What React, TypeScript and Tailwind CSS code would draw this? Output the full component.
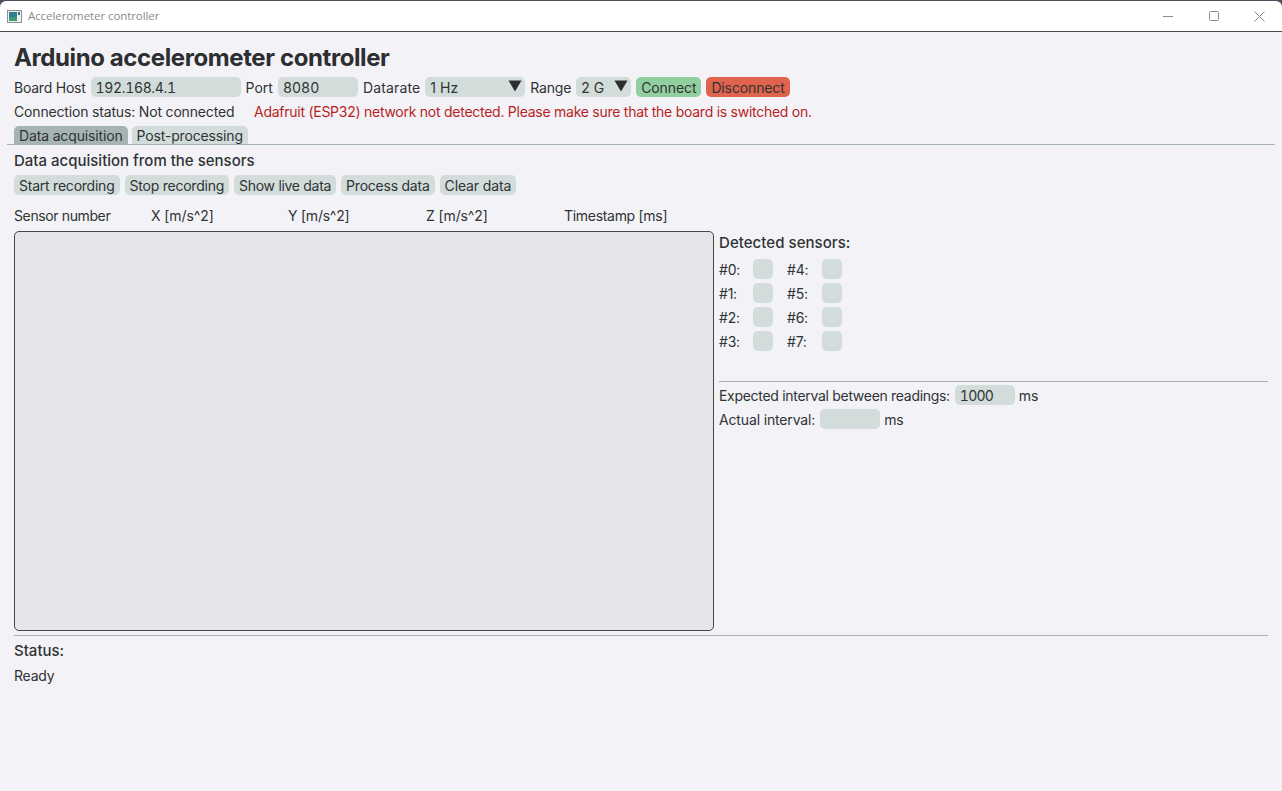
import React from "react";

const Field = ({ className = "", children }: { className?: string; children?: React.ReactNode }) => (
  <div className={`h-5 rounded-[5px] bg-[#d2dcda] px-[5px] tabular-nums ${className}`}>{children}</div>
);

const Btn = ({ children, className = "bg-[#d2dcda]" }: { children: React.ReactNode; className?: string }) => (
  <div className={`h-5 rounded-[5px] px-[5px] ${className}`}>{children}</div>
);

const Select = ({ className, children }: { className: string; children: React.ReactNode }) => (
  <div className={`flex h-5 items-start justify-between rounded-[5px] bg-[#d2dcda] pl-[5px] pr-[3px] tracking-normal ${className}`}>
    <span>{children}</span>
    <svg width="14" height="12" viewBox="0 0 14 12" className="mt-[3px]">
      <path d="M0.5 0.5H13.5L7 11.5Z" fill="#2a2e2e" />
    </svg>
  </div>
);

const sensors = [
  ["#0:", "#4:"],
  ["#1:", "#5:"],
  ["#2:", "#6:"],
  ["#3:", "#7:"],
];

const columns = [
  ["Sensor number", "w-[137px] tracking-[-0.38px]"],
  ["X [m/s^2]", "w-[137px] tracking-[-0.1px]"],
  ["Y [m/s^2]", "w-[138px]"],
  ["Z [m/s^2]", "w-[138px] tracking-[-0.12px]"],
  ["Timestamp [ms]", "tracking-[-0.3px]"],
];

export default function App() {
  return (
    <div className="flex h-[791px] w-[1282px] flex-col overflow-hidden bg-[#f2f2f7] font-['Inter',sans-serif] text-[14px] leading-5 tracking-[-0.23px] text-[#303334]">
      <div className="shrink-0 bg-[#50505c]">
        <div className="mt-px flex h-[30px] items-center justify-between rounded-t-[6px] bg-white pl-[7px]">
          <div className="flex items-center gap-[6px]">
            <svg width="15" height="13" viewBox="0 0 15 13">
              <rect x="0.5" y="0.5" width="14" height="12" fill="#f0f0f0" stroke="#8a8f94" />
              <rect x="2" y="2" width="8" height="9" fill="#2f7f8f" />
              <rect x="2" y="7" width="8" height="4" fill="#3f9a78" />
              <rect x="11" y="2" width="2" height="3" fill="#3f6f8f" />
            </svg>
            <span className="font-['Open_Sans',sans-serif] text-[11.5px] tracking-[-0.08px] text-[#8a8a8a]">Accelerometer controller</span>
          </div>
          <div className="flex items-center">
            <div className="flex w-[46px] justify-center">
              <svg width="10" height="10" viewBox="0 0 10 10">
                <path d="M0 5.5H10" stroke="#8a8a8a" />
              </svg>
            </div>
            <div className="flex w-[46px] justify-center">
              <svg width="10" height="10" viewBox="0 0 10 10">
                <rect x="0.5" y="0.5" width="9" height="9" rx="1" fill="none" stroke="#8a8a8a" />
              </svg>
            </div>
            <div className="flex w-[45px] justify-center">
              <svg width="11" height="11" viewBox="0 0 11 11">
                <path d="M0.5 0.5L10.5 10.5M10.5 0.5L0.5 10.5" stroke="#8a8a8a" />
              </svg>
            </div>
          </div>
        </div>
        <div className="h-px bg-[#4a4a50]" />
      </div>

      <div className="flex flex-1 flex-col px-[14px]">
        <h1 className="mt-[12px] h-[28px] text-[24px] font-bold leading-[28px] tracking-[-0.4px] text-[#2c2e30]">
          Arduino accelerometer controller
        </h1>
        <div className="mt-[5px] flex h-5 items-start gap-[5px] leading-[22px]">
          <span>Board Host</span>
          <Field className="w-[150px] tracking-[-0.35px]">192.168.4.1</Field>
          <span className="tracking-normal">Port</span>
          <Field className="w-[80px] tracking-normal">8080</Field>
          <span className="tracking-[0.15px]">Datarate</span>
          <Select className="w-[100px]">1 Hz</Select>
          <span className="tracking-[-0.2px]">Range</span>
          <Select className="w-[55px]">2 G</Select>
          <Btn className="bg-[#92cf9f] tracking-[-0.1px]">Connect</Btn>
          <Btn className="bg-[#e0634e] tracking-[-0.13px]">Disconnect</Btn>
        </div>
        <div className="mt-[5px] flex">
          <span className="w-[240px] tracking-[-0.17px]">Connection status: Not connected</span>
          <span className="tracking-[-0.26px] text-[#b81f24]">Adafruit (ESP32) network not detected. Please make sure that the board is switched on.</span>
        </div>
        <div className="-mx-[7px] mt-[4px] flex gap-[4px] border-b border-[#a5b4b2] px-[7px] tracking-[-0.15px]">
          <div className="h-[18px] rounded-t-[5px] bg-[#a5b4b2] px-[5px]">Data acquisition</div>
          <div className="h-[18px] rounded-t-[5px] bg-[#d2dcda] px-[5px]">Post-processing</div>
        </div>
        <h2 className="mt-[6px] text-[15px] font-medium leading-5 tracking-normal">Data acquisition from the sensors</h2>
        <div className="mt-[4px] flex h-5 gap-[5px] leading-[22px]">
          <Btn>Start recording</Btn>
          <Btn>Stop recording</Btn>
          <Btn className="bg-[#d2dcda] tracking-[-0.3px]">Show live data</Btn>
          <Btn>Process data</Btn>
          <Btn className="bg-[#d2dcda] tracking-[-0.13px]">Clear data</Btn>
        </div>
        <div className="mt-[11px] flex">
          {columns.map(([label, className]) => (
            <span key={label} className={className}>{label}</span>
          ))}
        </div>
        <div className="mt-[5px] flex gap-[5px]">
          <div className="h-[400px] w-[700px] shrink-0 rounded-[5px] border border-[#45474a] bg-[#e4e4e9]" />
          <div className="flex-1">
            <div className="mt-px text-[15px] font-medium leading-[22px] tracking-[0.05px]">Detected sensors:</div>
            <div className="mt-[5px] flex flex-col gap-1 leading-[22px]">
              {sensors.map(([a, b]) => (
                <div key={a} className="flex h-5 items-start">
                  <span className="w-[34px]">{a}</span>
                  <div className="h-5 w-5 rounded-[5px] bg-[#d2dcda]" />
                  <span className="ml-[14px] w-[35px]">{b}</span>
                  <div className="h-5 w-5 rounded-[5px] bg-[#d2dcda]" />
                </div>
              ))}
            </div>
            <div className="mt-[30px] border-t border-[#a5b4b2]" />
            <div className="mt-[3px] flex h-5 items-start gap-[5px] leading-[22px]">
              <span className="tracking-[-0.3px]">Expected interval between readings:</span>
              <Field className="w-[60px] tracking-[-0.75px]">1000</Field>
              <span className="-ml-px">ms</span>
            </div>
            <div className="mt-[4px] flex h-5 items-start gap-[5px] leading-[22px]">
              <span className="tracking-[-0.15px]">Actual interval:</span>
              <Field className="w-[60px]" />
              <span className="-ml-px">ms</span>
            </div>
          </div>
        </div>
        <div className="mt-[4px] border-t border-[#a5b4b2]" />
        <div className="mt-[5px] text-[15px] font-medium leading-5 tracking-normal">Status:</div>
        <div className="mt-[5px]">Ready</div>
      </div>
    </div>
  );
}
